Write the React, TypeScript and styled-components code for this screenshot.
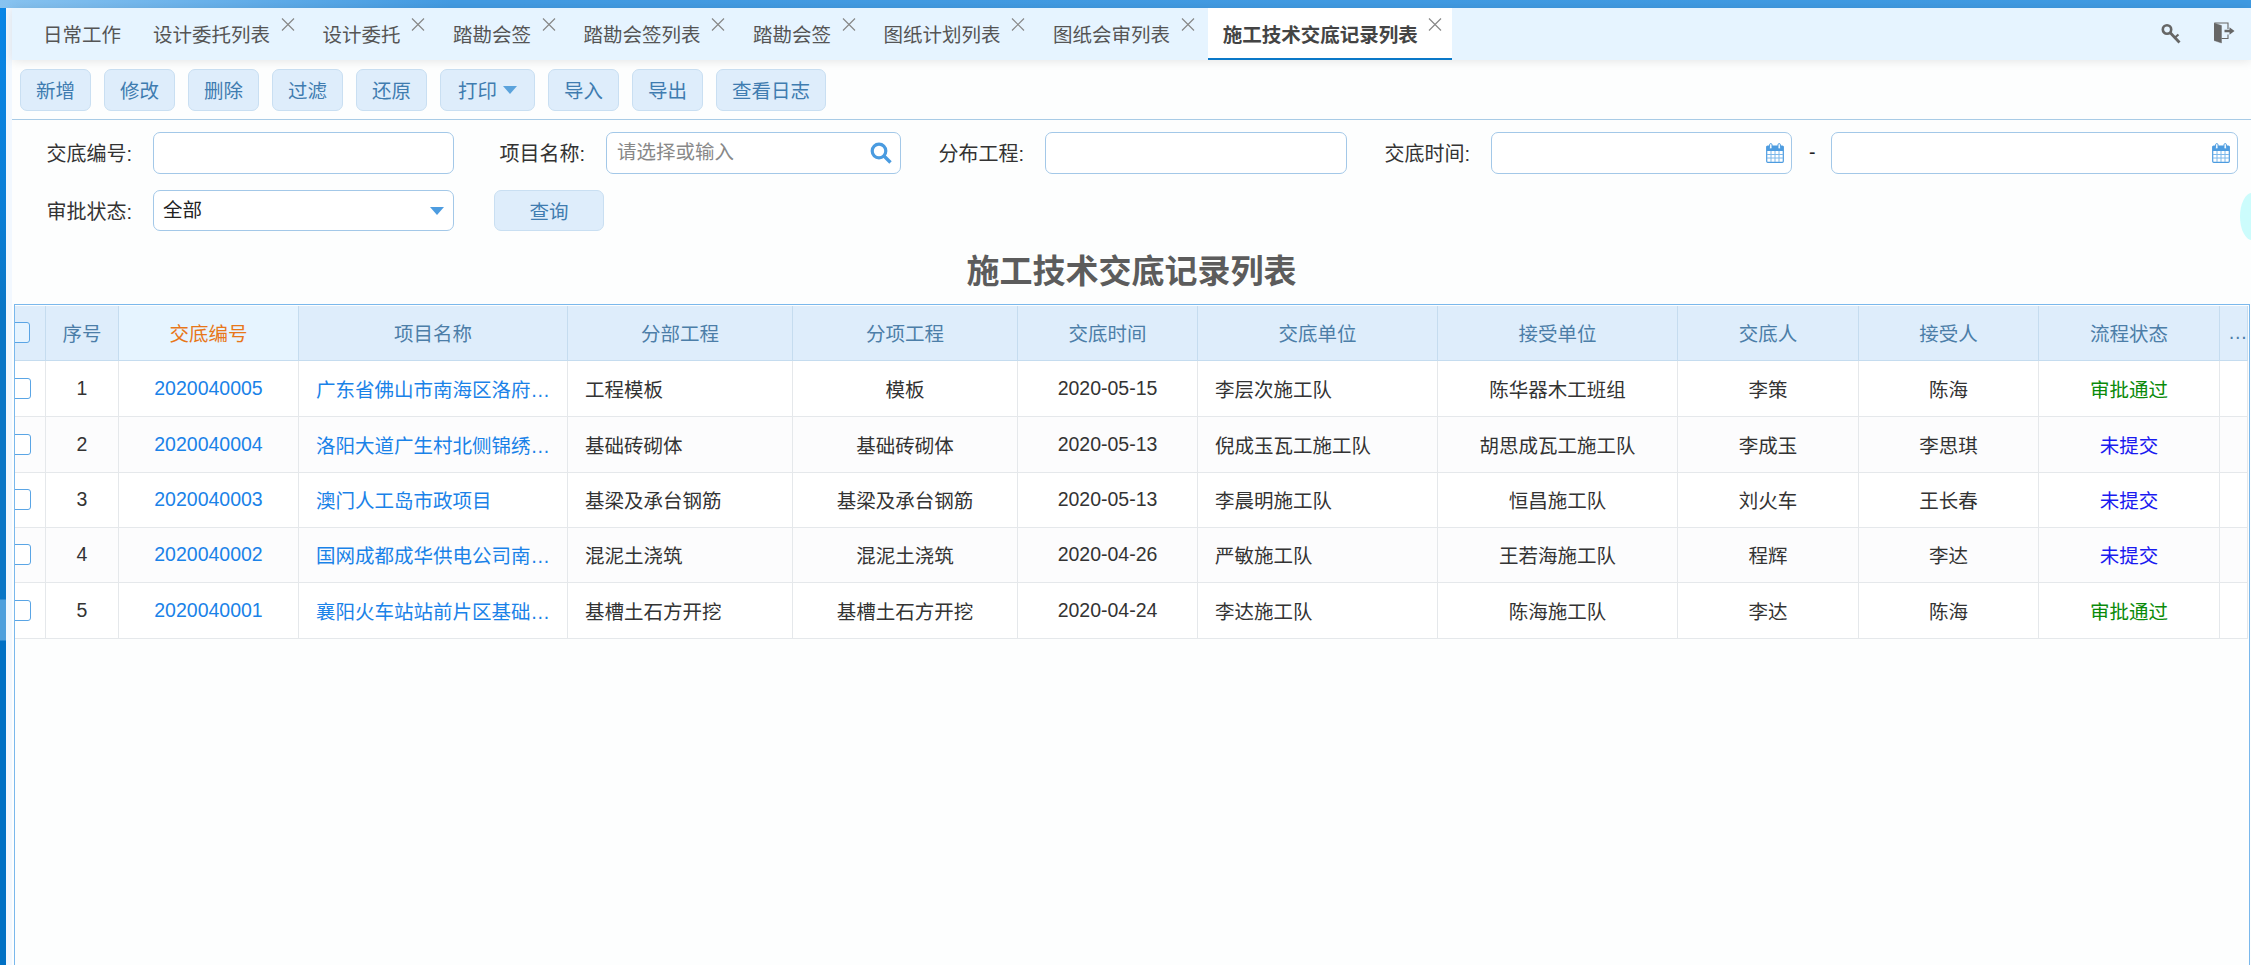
import styled, { createGlobalStyle } from 'styled-components';

const GlobalStyle = createGlobalStyle`
  html, body {
    margin: 0;
    padding: 0;
    background: #fdfefe;
  }
  body {
    font-family: "Liberation Sans", "Noto Sans CJK SC", sans-serif;
    font-size: 19.5px;
    color: #333;
  }
  * {
    box-sizing: border-box;
  }
`;

const Page = styled.div`
  position: relative;
  display: flex;
  flex-direction: column;
  width: 2251px;
  height: 965px;
  overflow: hidden;
`;

const TopBar = styled.div`
  flex: none;
  height: 8px;
  background: linear-gradient(90deg, #88c3f0 0%, #6db4ec 8%, #439be2 20%, #3f9ae2 100%);
`;

const Body = styled.div`
  flex: 1;
  display: flex;
  min-height: 0;
  background: #f2f8ff;
`;

const Rail = styled.div`
  flex: none;
  width: 6px;
  background: linear-gradient(180deg, #0a86e6 0, #0a7ed6 200px, #0a76c6 300px, #0a76c6 591px, #4f9fdc 592px, #4f9fdc 632px, #0070c4 633px);
`;

const Main = styled.div`
  flex: 1;
  min-width: 0;
  display: flex;
  flex-direction: column;
  margin-left: 6px;
  background: #fdfefe;
`;

const TabBar = styled.div`
  position: relative;
  z-index: 1;
  flex: none;
  display: flex;
  align-items: stretch;
  height: 52px;
  padding-left: 16px;
  background: #e6f4ff;
  box-shadow: 0 1px 10px rgba(0, 0, 0, 0.1);
`;

const Tab = styled.div<{ $active?: boolean; $closable?: boolean }>`
  position: relative;
  display: flex;
  align-items: center;
  padding: 0 ${(props) => (props.$active ? '34px' : props.$closable ? '37.5px' : '17px')} 0 15px;
  white-space: nowrap;
  color: ${(props) => (props.$active ? '#444' : '#555')};
  font-weight: ${(props) => (props.$active ? 700 : 400)};
  background: ${(props) => (props.$active ? '#fff' : 'transparent')};
  border-bottom: 2px solid ${(props) => (props.$active ? '#0a78c8' : 'transparent')};
`;

const CloseIcon = styled.svg<{ $active?: boolean }>`
  position: absolute;
  top: 10px;
  right: ${(props) => (props.$active ? 10 : 13)}px;
  width: 14px;
  height: 13px;
  stroke: #888;
  stroke-width: 1.2;
  fill: none;
`;

const TabTools = styled.div`
  display: flex;
  align-items: center;
  gap: 31px;
  margin-left: auto;
  padding-right: 15px;
  margin-top: -2px;
`;

const ToolIcon = styled.svg`
  width: 22px;
  height: 22px;
  fill: #666;
  stroke: #666;
`;

const Toolbar = styled.div`
  flex: none;
  display: flex;
  gap: 13px;
  height: 60px;
  padding: 9px 0 0 8px;
  border-bottom: 1.5px solid #a8cbe6;
`;

const ActionButton = styled.button<{ $width?: number }>`
  display: inline-flex;
  align-items: center;
  justify-content: center;
  gap: 6px;
  width: ${(props) => props.$width ?? 71}px;
  height: 41.5px;
  padding: 0;
  font: inherit;
  color: #3f7cb0;
  background: #deedfb;
  border: 1px solid #c9dff2;
  border-radius: 7px;
`;

const CaretDown = styled.span`
  width: 0;
  height: 0;
  border-left: 7px solid transparent;
  border-right: 7px solid transparent;
  border-top: 8px solid #5ba3dc;
`;

const FilterGrid = styled.div`
  flex: none;
  display: grid;
  grid-template-columns: 141px 301px 152px 295px 144px 302px 144px 301px 39px 407px;
  grid-auto-rows: 41.5px;
  row-gap: 16px;
  padding-top: 12px;
  align-items: center;
`;

const FieldLabel = styled.label`
  padding-right: 21px;
  text-align: right;
  white-space: nowrap;
  font-size: 20px;
  color: #333;
`;

const InputBox = styled.div`
  position: relative;
  height: 41.5px;
`;

const TextInput = styled.input`
  width: 100%;
  height: 100%;
  padding: 0 36px 0 10px;
  font: inherit;
  color: #222;
  background: #fff;
  border: 1.5px solid #a3c8e8;
  border-radius: 7px;
  outline: none;

  &::placeholder {
    color: #888;
    opacity: 1;
  }
`;

const SelectInput = styled.select`
  width: 100%;
  height: 100%;
  padding: 0 36px 0 9px;
  font: inherit;
  color: #222;
  background: #fff;
  border: 1.5px solid #a3c8e8;
  border-radius: 7px;
  outline: none;
  -webkit-appearance: none;
  appearance: none;
`;

const SelectCaret = styled(CaretDown)`
  position: absolute;
  top: 17px;
  right: 10px;
  border-top-color: #4d9ce0;
`;

const FieldIcon = styled.svg`
  position: absolute;
  top: 50%;
  right: 8px;
  transform: translateY(-50%);
  pointer-events: none;
`;

const Dash = styled.span`
  padding-left: 17px;
  color: #222;
`;

const QueryCell = styled.div`
  grid-column: 3 / 5;
  padding-left: 40px;
`;

const Title = styled.h1`
  flex: none;
  height: 73px;
  margin: 0;
  display: flex;
  align-items: center;
  justify-content: center;
  padding-top: 2px;
  font-size: 33px;
  font-weight: 700;
  color: #5c5c5c;
`;

const TableFrame = styled.div`
  flex: 1;
  min-height: 0;
  margin: 0 1px 0 2px;
  padding-top: 1px;
  overflow: hidden;
  border: 1.5px solid #7ab8ec;
  border-bottom: 0;
`;

const Table = styled.table`
  width: 2233px;
  table-layout: fixed;
  border-collapse: separate;
  border-spacing: 0;
`;

const HeadCell = styled.th<{ $sorted?: boolean }>`
  height: 54.5px;
  padding: 0 8px;
  overflow: hidden;
  white-space: nowrap;
  font-weight: 400;
  text-align: center;
  color: ${(props) => (props.$sorted ? '#e8771a' : '#4c7ea8')};
  background: ${(props) => (props.$sorted ? '#e6f4ff' : '#deedfb')};
  border-right: 1px solid #c5dcef;
  border-bottom: 1.5px solid #c5dcef;
`;

const Row = styled.tr<{ $striped: boolean; $height: number }>`
  height: ${(props) => props.$height}px;
  background: ${(props) => (props.$striped ? '#fcfcfd' : '#fff')};
`;

const Cell = styled.td<{ $align?: string; $color?: string }>`
  padding: 0 ${(props) => (props.$align === 'left' ? '0 0 17px' : '8px')};
  overflow: hidden;
  white-space: nowrap;
  text-align: ${(props) => props.$align ?? 'center'};
  color: ${(props) => props.$color ?? '#333'};
  border-right: 1px solid #e5e8eb;
  border-bottom: 1.5px solid #e5e8eb;
`;

const CheckCell = styled(Cell)`
  padding: 0;
  text-align: left;
`;

const CheckHeadCell = styled(HeadCell)`
  padding: 0;
  text-align: left;
`;

const CheckBox = styled.span`
  display: block;
  width: 21px;
  height: 21px;
  margin-left: -5px;
  background: #fff;
  border: 1.5px solid #5aa5e5;
  border-radius: 3px;
`;

const HeadCheckBox = styled(CheckBox)`
  margin-left: -6px;
  background: #e6f4ff;
`;

const FloatingHandle = styled.div`
  position: absolute;
  top: 193px;
  right: -13px;
  width: 24px;
  height: 47px;
  background: #ccfcfc;
  border-radius: 50%;
`;

const tabs = ['设计委托列表', '设计委托', '踏勘会签', '踏勘会签列表', '踏勘会签', '图纸计划列表', '图纸会审列表'];
const actions = ['新增', '修改', '删除', '过滤', '还原', '打印', '导入', '导出', '查看日志'];

const columns = [
  { title: '序号', width: 73 },
  { title: '交底编号', width: 180, sorted: true },
  { title: '项目名称', width: 269 },
  { title: '分部工程', width: 225 },
  { title: '分项工程', width: 225 },
  { title: '交底时间', width: 180 },
  { title: '交底单位', width: 240 },
  { title: '接受单位', width: 240 },
  { title: '交底人', width: 181 },
  { title: '接受人', width: 180 },
  { title: '流程状态', width: 181 },
];

const LINK = '#1a82e8';
const APPROVED = '#0a8a0a';
const DRAFT = '#1a1af0';

const rowHeights = [56, 56, 55, 55, 56];

const rows = [
  ['2020040005', '广东省佛山市南海区洛府…', '工程模板', '模板', '2020-05-15', '李层次施工队', '陈华器木工班组', '李策', '陈海', '审批通过'],
  ['2020040004', '洛阳大道广生村北侧锦绣…', '基础砖砌体', '基础砖砌体', '2020-05-13', '倪成玉瓦工施工队', '胡思成瓦工施工队', '李成玉', '李思琪', '未提交'],
  ['2020040003', '澳门人工岛市政项目', '基梁及承台钢筋', '基梁及承台钢筋', '2020-05-13', '李晨明施工队', '恒昌施工队', '刘火车', '王长春', '未提交'],
  ['2020040002', '国网成都成华供电公司南…', '混泥土浇筑', '混泥土浇筑', '2020-04-26', '严敏施工队', '王若海施工队', '程辉', '李达', '未提交'],
  ['2020040001', '襄阳火车站站前片区基础…', '基槽土石方开挖', '基槽土石方开挖', '2020-04-24', '李达施工队', '陈海施工队', '李达', '陈海', '审批通过'],
];

function CalendarIcon() {
  return (
    <FieldIcon width="18" height="20" viewBox="0 0 18 20">
      <rect x="0.7" y="3" width="16.6" height="16.3" rx="1" fill="#fff" stroke="#4d9ce0" strokeWidth="1.2" />
      <rect x="0.7" y="3" width="16.6" height="5" fill="#4d9ce0" />
      <rect x="3.6" y="0.6" width="2.4" height="5.4" rx="1.2" fill="#fff" stroke="#4d9ce0" strokeWidth="1" />
      <rect x="12" y="0.6" width="2.4" height="5.4" rx="1.2" fill="#fff" stroke="#4d9ce0" strokeWidth="1" />
      <path d="M1 11.5H17M1 15H17M5 8V19M9 8V19M13 8V19" stroke="#7db8ea" strokeWidth="1" fill="none" />
    </FieldIcon>
  );
}

function SearchIcon() {
  return (
    <FieldIcon width="24" height="24" viewBox="0 0 24 24" fill="none" stroke="#4a9be0">
      <circle cx="10" cy="10" r="6.8" strokeWidth="3.2" />
      <path d="M15 15L21.5 21.5" strokeWidth="3.4" />
    </FieldIcon>
  );
}

export default function App() {
  return (
    <Page>
      <GlobalStyle />
      <TopBar />
      <Body>
        <Rail />
        <Main>
          <TabBar>
            <Tab>日常工作</Tab>
            {tabs.map((tab, index) => (
              <Tab key={index} $closable>
                {tab}
                <CloseIcon viewBox="0 0 14 13">
                  <path d="M1 0.5L13 12.5M13 0.5L1 12.5" />
                </CloseIcon>
              </Tab>
            ))}
            <Tab $active $closable>
              施工技术交底记录列表
              <CloseIcon $active viewBox="0 0 14 13">
                <path d="M1 0.5L13 12.5M13 0.5L1 12.5" />
              </CloseIcon>
            </Tab>
            <TabTools>
              <ToolIcon viewBox="0 0 22 22" fill="none">
                <circle cx="6" cy="7.5" r="4.2" fill="none" strokeWidth="2.6" />
                <path d="M9 10.5L18.5 20.5" fill="none" strokeWidth="2.8" />
                <path d="M14 15.5L17.5 12.5" fill="none" strokeWidth="2.2" />
              </ToolIcon>
              <ToolIcon viewBox="0 0 22 22">
                <path d="M0 1L7.5 3.5V21L0 18.5Z" strokeWidth="0.4" />
                <path d="M0.5 1H14V7M14 12.5V16.5H7.5" fill="none" strokeWidth="1.1" />
                <path d="M10.5 7.8H15.5V5.2L20.5 9L15.5 12.8V10.2H10.5Z" strokeWidth="0" />
              </ToolIcon>
            </TabTools>
          </TabBar>

          <Toolbar>
            {actions.map((action) => (
              <ActionButton key={action} $width={action === '打印' ? 95 : action === '查看日志' ? 110 : 71}>
                {action}
                {action === '打印' && <CaretDown />}
              </ActionButton>
            ))}
          </Toolbar>

          <FilterGrid>
            <FieldLabel>交底编号:</FieldLabel>
            <InputBox>
              <TextInput />
            </InputBox>
            <FieldLabel>项目名称:</FieldLabel>
            <InputBox>
              <TextInput placeholder="请选择或输入" />
              <SearchIcon />
            </InputBox>
            <FieldLabel>分布工程:</FieldLabel>
            <InputBox>
              <TextInput />
            </InputBox>
            <FieldLabel>交底时间:</FieldLabel>
            <InputBox>
              <TextInput />
              <CalendarIcon />
            </InputBox>
            <Dash>-</Dash>
            <InputBox>
              <TextInput />
              <CalendarIcon />
            </InputBox>

            <FieldLabel>审批状态:</FieldLabel>
            <InputBox>
              <SelectInput defaultValue="全部">
                <option>全部</option>
              </SelectInput>
              <SelectCaret />
            </InputBox>
            <QueryCell>
              <ActionButton $width={110}>查询</ActionButton>
            </QueryCell>
          </FilterGrid>

          <Title>施工技术交底记录列表</Title>

          <TableFrame>
            <Table>
              <colgroup>
                <col style={{ width: 31 }} />
                {columns.map((column) => (
                  <col key={column.title} style={{ width: column.width }} />
                ))}
                <col style={{ width: 28 }} />
              </colgroup>
              <thead>
                <tr>
                  <CheckHeadCell>
                    <HeadCheckBox />
                  </CheckHeadCell>
                  {columns.map((column) => (
                    <HeadCell key={column.title} $sorted={column.sorted}>
                      {column.title}
                    </HeadCell>
                  ))}
                  <HeadCell>…</HeadCell>
                </tr>
              </thead>
              <tbody>
                {rows.map((row, index) => (
                  <Row key={row[0]} $striped={index % 2 === 1} $height={rowHeights[index]}>
                    <CheckCell>
                      <CheckBox />
                    </CheckCell>
                    <Cell>{index + 1}</Cell>
                    <Cell $color={LINK}>{row[0]}</Cell>
                    <Cell $align="left" $color={LINK}>
                      {row[1]}
                    </Cell>
                    <Cell $align="left">{row[2]}</Cell>
                    <Cell>{row[3]}</Cell>
                    <Cell>{row[4]}</Cell>
                    <Cell $align="left">{row[5]}</Cell>
                    <Cell>{row[6]}</Cell>
                    <Cell>{row[7]}</Cell>
                    <Cell>{row[8]}</Cell>
                    <Cell $color={row[9] === '审批通过' ? APPROVED : DRAFT}>{row[9]}</Cell>
                    <Cell />
                  </Row>
                ))}
              </tbody>
            </Table>
          </TableFrame>
        </Main>
      </Body>
      <FloatingHandle />
    </Page>
  );
}
